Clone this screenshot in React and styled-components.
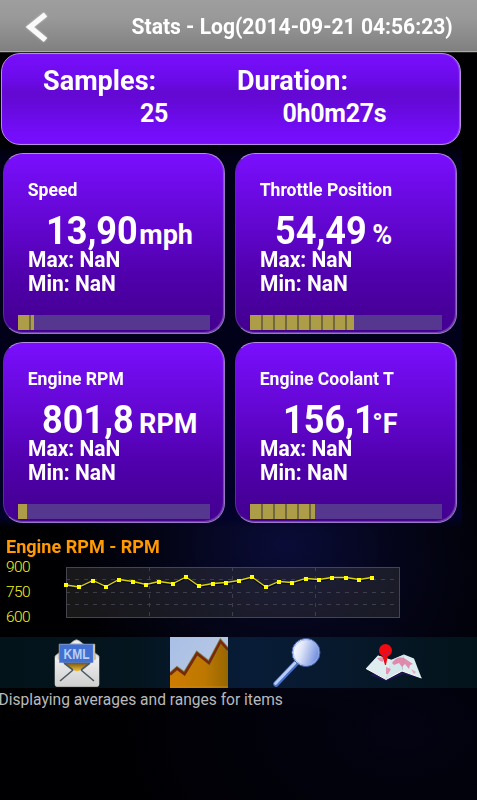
import React from 'react';
import styled, { createGlobalStyle } from 'styled-components';

const GlobalStyle = createGlobalStyle`
    *, *::before, *::after {
        box-sizing: border-box;
    }
    body {
        margin: 0;
        background-color: #000;
    }
`;

const Page = styled.div`
    width: 477px;
    height: 800px;
    overflow: hidden;
    display: flex;
    flex-direction: column;
    color: white;
    font-family: Roboto, sans-serif;
    background:
        radial-gradient(ellipse 230px 170px at 285px 545px, #0a0c38 0%, rgba(6, 7, 34, 0.7) 50%, rgba(0, 0, 0, 0) 100%),
        radial-gradient(ellipse 300px 200px at 400px 730px, #030312 0%, rgba(0, 0, 0, 0) 100%),
        #000002;
`;

const Header = styled.header`
    flex: none;
    height: 52px;
    display: flex;
    justify-content: space-between;
    padding: 0 24px 0 25px;
    border-bottom: 1px solid #a9a9a9;
    background: linear-gradient(#9e9e9e 0%, #999 35%, #808080 100%);
    box-shadow: 0 1px 0 #262626;
`;

const Title = styled.h1`
    margin: 0;
    font-size: 21.5px;
    font-weight: 700;
    line-height: 53px;
    white-space: nowrap;
    transform: scaleX(0.98);
    transform-origin: 100% 50%;
`;

const BackIcon = styled.svg`
    width: 26px;
    height: 36px;
    margin-top: 9px;
    filter: drop-shadow(0 0 1px rgba(255, 255, 255, 0.5));
`;

const Summary = styled.section`
    flex: none;
    width: 460px;
    height: 92px;
    margin: 1px 0 0 1px;
    padding: 12px 0 0 41px;
    display: grid;
    grid-template-columns: 194px 194px;
    border: 1px solid #b78be0;
    border-radius: 19px;
    background: linear-gradient(#780ffc 0%, #6c0bea 28%, #6409d4 41%, #6409d6 52%, #740dfa 88%, #760efc 100%);
    box-shadow: inset -1px 0 1px rgba(214, 190, 240, 0.4);
`;

const SummaryItem = styled.div`
    display: flex;
    flex-direction: column;
`;

const SummaryName = styled.span`
    font-size: 28.5px;
    font-weight: 700;
    line-height: 30px;
    transform: scaleX(0.95);
    transform-origin: 0 50%;
`;

const SummaryValue = styled.span`
    margin-top: 3px;
    padding-left: ${({ indent }) => indent}px;
    font-size: 25px;
    font-weight: 700;
    line-height: 29px;
    letter-spacing: -0.3px;
`;

const Cards = styled.main`
    flex: none;
    width: 462px;
    height: 383px;
    display: grid;
    grid-template-columns: 222px 222px;
    grid-auto-rows: 181px;
    gap: 8px 10px;
    padding: 8px 0 0 3px;
    background: linear-gradient(#000006 0, #010118 12px, #01011a 60%, #02022a 97%, rgba(1, 1, 12, 0) 100%);
`;

const Card = styled.article`
    display: flex;
    flex-direction: column;
    padding: 24px 14px 0 14px;
    border: 1px solid #9a76c2;
    border-top-color: #b68be6;
    border-left-color: #5a2c9c;
    border-radius: 20px;
    background: linear-gradient(#7a0ffe 0%, #6f0be9 17%, #5e05c8 46%, #5000ac 68%, #42008e 100%);
    box-shadow: inset -1px -1px 1px rgba(200, 170, 230, 0.4);
`;

const CardTitle = styled.h2`
    margin: 0 -30px 0 0;
    padding-left: 10.5px;
    font-size: 19px;
    font-weight: 700;
    line-height: 24px;
    white-space: nowrap;
    transform: scaleX(0.925);
    transform-origin: 0 50%;
`;

const Reading = styled.div`
    display: flex;
    align-items: baseline;
    margin-top: 7px;
    padding-left: ${({ indent }) => indent + 10}px;
    height: 44px;
    line-height: 44px;
    white-space: nowrap;
    font-weight: 700;
`;

const Value = styled.span`
    width: 96.6px;
    margin-right: -4.8px;
    font-size: 38px;
    transform: scaleX(0.95);
    transform-origin: 0 50%;
`;

const Unit = styled.span`
    margin-left: ${({ gap }) => gap}px;
    font-size: 27px;
`;

const Ranges = styled.div`
    margin-top: -5px;
`;

const Range = styled.div`
    padding-left: 10.5px;
    font-size: 22px;
    font-weight: 700;
    line-height: 24px;
    transform: scaleX(0.955);
    transform-origin: 0 50%;
`;

const Track = styled.div`
    height: 15px;
    width: 192px;
    margin-top: 19px;
    background-color: #553790;
`;

const Fill = styled.div`
    height: 100%;
    background:
        linear-gradient(#ad9d48, #ad9d48) 0 0 / 1px 100% no-repeat,
        repeating-linear-gradient(90deg, #70683f 0 1px, #ad9d48 1px 11px, #70683f 11px 12px);
`;

const ChartSection = styled.section`
    flex: none;
    height: 109px;
    padding: 8px 0 0 6px;
`;

const ChartTitle = styled.h2`
    margin: 0;
    color: #ff9a00;
    font-size: 19px;
    font-weight: 700;
    line-height: 22px;
    transform: scaleX(0.95);
    transform-origin: 0 50%;
`;

const ChartBody = styled.div`
    display: flex;
    margin-top: -3px;
`;

const Axis = styled.div`
    width: 54px;
    height: 70px;
    display: flex;
    flex-direction: column;
    color: #f2f21c;
    font-size: 15.5px;
    font-weight: 300;
    letter-spacing: -0.6px;
    line-height: 25px;
`;

const Plot = styled.svg`
    width: 345px;
    height: 62px;
    margin-top: 11px;
`;

const Toolbar = styled.nav`
    flex: none;
    height: 51px;
    display: flex;
    align-items: center;
    padding-left: 54px;
    background: linear-gradient(90deg, #03131a 0%, #04151f 28%, #081c38 52%, #061828 78%, #03131a 100%);

    svg {
        flex: none;
        display: block;
    }
`;

const ToolButton = styled.button`
    display: flex;
    width: ${({ width }) => width}px;
    height: 51px;
    margin: 0 ${({ space }) => space || 0}px 0 0;
    padding: 0;
    border: 0;
    background: none;
`;

const Status = styled.p`
    margin: 1px 0 0;
    color: #b9b9bb;
    font-size: 16.5px;
    line-height: 22px;
    white-space: nowrap;
    transform: translateX(-1.5px) scaleX(0.943);
    transform-origin: 0 50%;
`;

const cards = [
    { title: 'Speed', value: '13,90', unit: 'mph', indent: 17.5, gap: 2, fill: 16 },
    { title: 'Throttle Position', value: '54,49', unit: '%', indent: 15, gap: 5.5, fill: 104 },
    { title: 'Engine RPM', value: '801,8', unit: 'RPM', indent: 13.5, gap: 5.8, fill: 9 },
    { title: 'Engine Coolant T', value: '156,1', unit: '°F', indent: 22.5, gap: -2, fill: 65 },
];

// sample heights in plot pixels, one every 13.32px
const samples = [
    19, 21, 14.5, 20.5, 13.5, 15.5, 18.5, 15.5, 17.5, 11, 20, 17.5,
    16.5, 14.5, 11, 21, 15.5, 16.5, 12.5, 13.5, 11.5, 11.5, 13.5, 11.5,
];
const points = samples.map((y, i) => [Math.round(6 + i * 13.32), y]);

const StatCard = ({ title, value, unit, indent, gap, fill }) => (
    <Card>
        <CardTitle>{title}</CardTitle>
        <Reading indent={indent}>
            <Value>{value}</Value>
            <Unit gap={gap}>{unit}</Unit>
        </Reading>
        <Ranges>
            <Range>Max: NaN</Range>
            <Range>Min: NaN</Range>
        </Ranges>
        <Track>
            <Fill style={{ width: fill }} />
        </Track>
    </Card>
);

const Chart = () => (
    <Plot viewBox="0 0 345 62">
        <rect x="6.5" y="1.5" width="333" height="50" fill="rgba(70, 70, 70, 0.34)" stroke="#45454f" />
        <g stroke="#4a4a58" strokeWidth="1" strokeDasharray="4 5" fill="none" opacity="0.75">
            <path d="M6 13.5H336M6 26.5H336M6 38.5H336" />
            <path d="M89.5 1V51M172.5 1V51M255.5 1V51" />
        </g>
        <polyline
            points={points.map(([x, y]) => `${x},${y + 1}`).join(' ')}
            fill="none" stroke="#05052a" strokeWidth="2"
        />
        <polyline points={points.map((p) => p.join(',')).join(' ')} fill="none" stroke="#d6d00c" strokeWidth="1.3" />
        {points.map(([x, y]) => (
            <rect key={x} x={x - 2} y={Math.round(y) - 2} width="4" height="4" fill="#ffff00" />
        ))}
    </Plot>
);

const MailIcon = () => (
    <svg width="46" height="51" viewBox="0 0 46 51">
        <defs>
            <linearGradient id="paper" x1="0" y1="0" x2="0" y2="1">
                <stop offset="0" stopColor="#f0f0f0" />
                <stop offset="1" stopColor="#cfcfcf" />
            </linearGradient>
            <linearGradient id="gold" x1="0" y1="0" x2="0" y2="1">
                <stop offset="0" stopColor="#6f5210" />
                <stop offset="1" stopColor="#f2bf35" />
            </linearGradient>
        </defs>
        <path d="M1 19 19.5 4Q22.5 1.500 25.500 4L45 19V47Q45 49.500 43 49.500H3Q1 49.500 1 47Z" fill="url(#paper)" stroke="#999" strokeWidth="0.8" />
        <path d="M5 7H41V27L23 35 5 27Z" fill="#e9dfbd" stroke="#8c7b55" strokeWidth="0.6" />
        <path d="M7 24H39L23 35Z" fill="url(#gold)" />
        <path d="M1 20 18.500 32.500Q23 36 27.500 32.500L45 20V47Q45 49.500 43 49.500H3Q1 49.500 1 47Z" fill="url(#paper)" />
        <path d="M10 25.500 23 34 36 25.500Z" fill="url(#gold)" />
        <path d="M6 44 19 33M40 44 27 33M19 33 10 26M27 33 36 26" fill="none" stroke="#4d5960" strokeWidth="1.6" />
        <rect x="5.500" y="7.500" width="33.500" height="18" fill="#4270d0" stroke="#5c83dc" strokeWidth="0.6" />
        <text x="22.500" y="22" textAnchor="middle" fontFamily="Liberation Sans, sans-serif" fontSize="15" fontWeight="700" textLength="26" lengthAdjust="spacingAndGlyphs" fill="#b9cff5">KML</text>
    </svg>
);

const GraphIcon = () => (
    <svg width="58" height="51" viewBox="0 0 58 51">
        <defs>
            <linearGradient id="sky" x1="0" y1="0" x2="1" y2="0.6">
                <stop offset="0" stopColor="#a9bfe6" />
                <stop offset="1" stopColor="#b9c9e4" />
            </linearGradient>
            <linearGradient id="area" x1="0" y1="0" x2="1" y2="0">
                <stop offset="0" stopColor="#ce7c00" />
                <stop offset="0.6" stopColor="#bd7800" />
                <stop offset="1" stopColor="#976600" />
            </linearGradient>
        </defs>
        <rect width="58" height="51" fill="url(#sky)" />
        <path d="M0 37 7 31 14.500 36.500 27 16 39 25.500 50.500 4 58 12.500V51H0Z" fill="url(#area)" />
        <path d="M0 37 7 31 14.500 36.500 27 16 39 25.500 50.500 4 58 12.500" fill="none" stroke="#7c8050" strokeWidth="3.6" />
        <path d="M0 37.500 7 31.500 14.500 37 27 16.500 39 26 50.500 4.500 58 13" fill="none" stroke="#7a2806" strokeWidth="2.6" />
        <path d="M0 50H58" stroke="#d18a10" strokeWidth="0.8" />
    </svg>
);

const SearchIcon = () => (
    <svg width="50" height="51" viewBox="0 0 50 51">
        <defs>
            <linearGradient id="lens" x1="0" y1="0.3" x2="1" y2="0.6">
                <stop offset="0" stopColor="#ffffff" />
                <stop offset="0.35" stopColor="#dfe5f8" />
                <stop offset="1" stopColor="#6787dc" />
            </linearGradient>
        </defs>
        <path d="M23.500 26.500 4 47" stroke="#4a70c8" strokeWidth="5.6" strokeLinecap="round" />
        <path d="M23 26 3.500 46.500" stroke="#b9cdf5" strokeWidth="2.8" strokeLinecap="round" />
        <circle cx="34" cy="15.500" r="14" fill="url(#lens)" stroke="#3f5da6" strokeWidth="1" />
        <circle cx="34" cy="15.500" r="12.800" fill="none" stroke="#9db2ea" strokeWidth="0.8" />
    </svg>
);

const MapIcon = () => (
    <svg width="60" height="51" viewBox="0 0 60 51">
        <path d="M6 38 22 44 40 37 54 41 48 36 20 34Z" fill="#24145a" opacity="0.9" />
        <path d="M2 31.500 14 18.500 28 23 22 42Z" fill="#e9f5f5" />
        <path d="M27 23 40 17.500 38 34 22 42.500Z" fill="#c9e3e6" />
        <path d="M14 18.500 27 23 40 17.500 38 34 22 42.500 2 31.500Z" fill="#d8eaec" opacity="0.7" />
        <path d="M40 17.500 50 21.500 57.500 41 38 34Z" fill="#dcedf0" />
        <path d="M2 31.500 22 42.500 38 34 57.500 41" fill="none" stroke="#fafafa" strokeWidth="1" />
        <path d="M28 26Q33 19 40 21L49 27 46 28 45 32 41 27 38 30 35 26 30 28Z" fill="#de7fa5" opacity="0.9" />
        <path d="M22 30 27 32 24 37 22 37ZM13 21 19 20 19 25 16 24Z" fill="#e288a8" opacity="0.9" />
        <path d="M47 32 52 35 50 37Z" fill="#e9a9bd" />
        <path d="M18 18H24L22 28H21Z" fill="#e80c14" />
        <circle cx="21.500" cy="13.500" r="6.500" fill="#f20a10" />
        <path d="M18.500 16.500Q22.500 18.500 25.500 14.500" fill="none" stroke="#a3226c" strokeWidth="1.2" />
    </svg>
);

export default function App() {
    return (
        <Page>
            <GlobalStyle />
            <Header>
                <BackIcon viewBox="0 0 26 36">
                    <path d="M20.500 5.500 5 18 20.500 31" fill="none" stroke="#fafafa" strokeWidth="5.4" />
                </BackIcon>
                <Title>Stats - Log(2014-09-21 04:56:23)</Title>
            </Header>
            <Summary>
                <SummaryItem>
                    <SummaryName>Samples:</SummaryName>
                    <SummaryValue indent={97}>25</SummaryValue>
                </SummaryItem>
                <SummaryItem>
                    <SummaryName>Duration:</SummaryName>
                    <SummaryValue indent={45.5}>0h0m27s</SummaryValue>
                </SummaryItem>
            </Summary>
            <Cards>
                {cards.map((card) => <StatCard key={card.title} {...card} />)}
            </Cards>
            <ChartSection>
                <ChartTitle>Engine RPM - RPM</ChartTitle>
                <ChartBody>
                    <Axis>
                        <span>900</span>
                        <span>750</span>
                        <span>600</span>
                    </Axis>
                    <Chart />
                </ChartBody>
            </ChartSection>
            <Toolbar>
                <ToolButton width={46} space={70}><MailIcon /></ToolButton>
                <ToolButton width={58} space={44}><GraphIcon /></ToolButton>
                <ToolButton width={50} space={42}><SearchIcon /></ToolButton>
                <ToolButton width={60}><MapIcon /></ToolButton>
            </Toolbar>
            <Status>Displaying averages and ranges for items</Status>
        </Page>
    );
}
